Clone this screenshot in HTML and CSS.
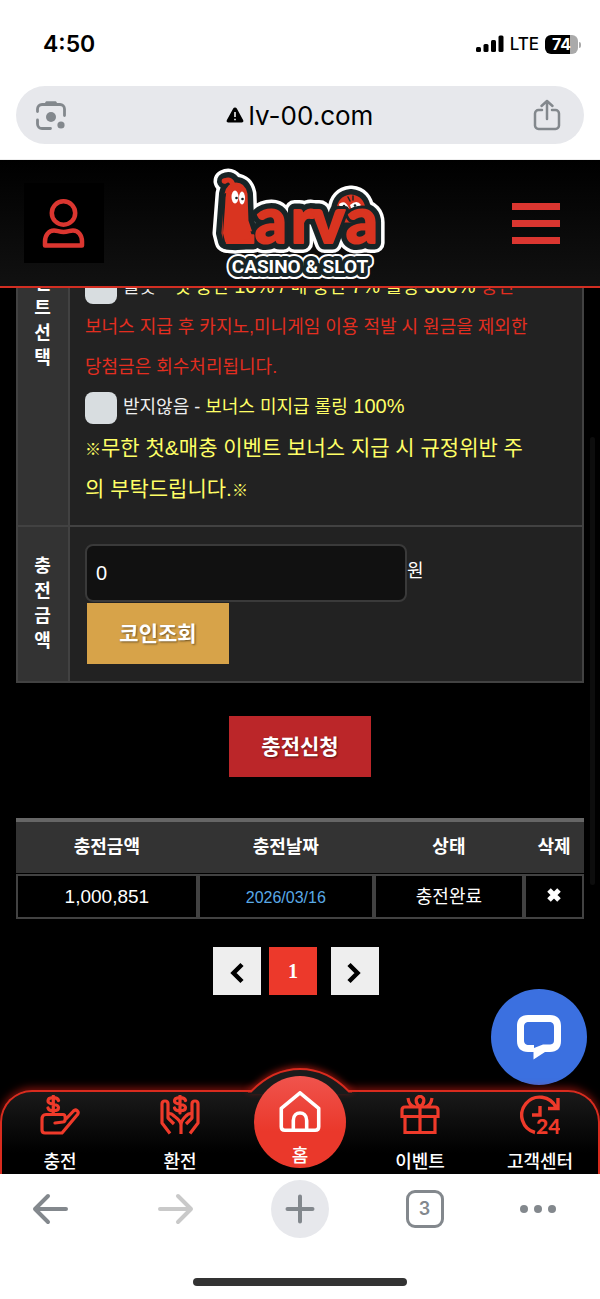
FILE: index.html
```html
<!DOCTYPE html>
<html lang="ko">
<head>
<meta charset="utf-8">
<meta name="viewport" content="width=device-width, initial-scale=1">
<title>Larva - 충전신청</title>
<link rel="stylesheet" href="styles.css">
</head>
<body>

<!-- status bar -->
<div class="status">
	<span class="time">4:50</span>
	<div class="status_right">
		<svg width="28" height="18" viewBox="0 0 28 18">
			<rect x="0" y="12" width="5" height="5" rx="1.5"/><rect x="7.5" y="9" width="5" height="8" rx="1.5"/>
			<rect x="15" y="5" width="5" height="12" rx="1.5"/><rect x="22.5" y="0.5" width="5" height="16.5" rx="1.5"/>
		</svg>
		<span class="lte">LTE</span>
		<span class="battery">74</span>
	</div>
</div>
<div class="address_wrap">
	<div class="address">
		<button class="plain" aria-label="lens">
			<svg width="30" height="30" viewBox="0 0 30 30" fill="none" stroke="#83888d" stroke-width="2.8" stroke-linecap="round">
				<path d="M1.5 11.5V9a4.500 4.500 0 0 1 4.500-4.500h18A4.500 4.500 0 0 1 28.500 9v6.500M1.500 20v4A4.500 4.500 0 0 0 6 28.500h8.500"/>
				<path d="M9 4.500l1.500-2.500h9L21 4.500z" fill="#83888d" stroke-width="1.5" stroke-linejoin="round"/>
				<circle cx="15" cy="17" r="5" fill="#83888d" stroke="none"/><circle cx="25" cy="25" r="3.6" fill="#83888d" stroke="none"/>
			</svg>
		</button>
		<span class="url">
			<svg width="18" height="16" viewBox="0 0 18 16"><path d="M9 .5c.8 0 1.400.4 1.800 1l6.300 11.500c.8 1.300 0 2.500-1.500 2.500H2.400C.9 15.500.1 14.300.9 13L7.200 1.500C7.600.9 8.200.5 9 .5z"/><path d="M9 5v5M9 11.800v1.500" stroke="#fff" stroke-width="1.5"/></svg>
			lv-00.com
		</span>
		<button class="plain" aria-label="share">
			<svg width="28" height="32" viewBox="0 0 28 32" fill="none" stroke="#83888d" stroke-width="2.5" stroke-linecap="round" stroke-linejoin="round">
				<path d="M9 11H5.500A3.500 3.500 0 0 0 2 14.500v12A3.500 3.500 0 0 0 5.500 30h17a3.500 3.500 0 0 0 3.500-3.500v-12a3.500 3.500 0 0 0-3.500-3.500H19M14 20V2M8.500 7L14 2l5.500 5"/>
			</svg>
		</button>
	</div>
</div>

<div class="site">
	<header class="header">
		<a class="member" href="#" aria-label="회원">
			<svg width="44" height="50" viewBox="0 0 44 50" fill="none" stroke="#db3630" stroke-width="4.5" stroke-linejoin="round">
				<circle cx="21.500" cy="15" r="11.7"/>
				<path d="M3 47.500v-4c0-6.500 3.800-11 9-11 3.500 0 5 1.500 9.500 1.500s6-1.500 9.500-1.500c5.200 0 9 4.500 9 11v4z"/>
			</svg>
		</a>
		<a class="logo" href="#" aria-label="Larva Casino &amp; Slot">
			<svg width="188" height="116" viewBox="-6 -2 188 116" stroke-linejoin="round" stroke-linecap="round">
				<defs>
					<!-- worm body and the small one behind the last letter -->
					<g id="worm">
						<path d="M12 66L15 27Q17 18 24 18T33 27L34 54 40 72Q26 77 14 74z"/>
						<path d="M21 18Q19 11 13 14" fill="none"/>
					</g>
					<path id="bird" d="M127 53V43Q128 31 139 30Q150 31 151 43V53z"/>
					<g id="word">
						<text class="lt" x="10" y="76">L</text>
						<text class="lt" x="43" y="76">a</text>
						<text class="lt" x="79" y="76">r</text>
						<text class="lt" x="100" y="76">v</text>
						<text class="lt" x="134" y="76">a</text>
					</g>
				</defs>
				<g fill="#fff" stroke="#fff" stroke-width="23"><use href="#worm"/><use href="#bird"/></g>
				<g fill="#fff" stroke="#fff" stroke-width="20"><use href="#word"/></g>
				<g fill="#182426" stroke="#182426" stroke-width="16"><use href="#worm"/><use href="#bird"/></g>
				<g fill="#182426" stroke="#182426" stroke-width="13"><use href="#word"/></g>
				<g fill="#d93420" stroke="#d93420" stroke-width="5"><use href="#bird"/><use href="#worm"/></g>
				<path d="M138 34l-2-4M141 33v-4" stroke="#182426" stroke-width="1.5"/>
				<g fill="#fff"><path d="M127 37q6-5 10 4-6 2-9 0zM138 38q7-6 11 0-4 4-10 3z"/></g>
				<g fill="#d93420" stroke="#182426" stroke-width="8"><use href="#word" class="outline"/></g>
				<g fill="#d93420" stroke="#d93420" stroke-width="2"><use href="#word"/><use href="#worm"/></g>
				<circle cx="12.500" cy="14" r="2.8" fill="#d93420"/>
				<g fill="#fff"><ellipse cx="23" cy="30" rx="3.5" ry="6.5"/><ellipse cx="30" cy="31" rx="3" ry="6.5"/></g>
				<g fill="#182426"><circle cx="24.500" cy="31" r="1.3"/><circle cx="30.500" cy="32" r="1.3"/><circle cx="132" cy="39" r="1.3"/><circle cx="143" cy="38.500" r="1.3"/></g>
				<g class="sub">
					<text x="88" y="106" stroke="#fff" stroke-width="12">CASINO &amp; SLOT</text>
					<text x="88" y="106" stroke="#182426" stroke-width="8">CASINO &amp; SLOT</text>
					<text x="88" y="106" fill="#fff">CASINO &amp; SLOT</text>
				</g>
			</svg>
		</a>
		<button class="menu" aria-label="메뉴"><i></i><i></i><i></i></button>
	</header>

	<main class="main">
		<form id="charge">
			<table class="form_table">
				<tr class="event_row">
					<th scope="row">이벤트선택</th>
					<td>
						<p><input type="checkbox" id="ev1"><label for="ev1">슬롯<b> - </b><em>첫 충전<b> 10% / </b>매 충전<b> 7% </b>롤링<b> 300% </b></em></label><span class="red">충전<br>보너스 지급 후 카지노,미니게임 이용 적발 시 원금을 제외한 당첨금은 회수처리됩니다.</span></p>
						<p><input type="checkbox" id="ev2"><label for="ev2">받지않음 - <em>보너스 미지급 롤링<b> 100%</b></em></label></p>
						<p class="notice"><small>※</small>무한 첫&amp;매충 이벤트 보너스 지급 시 규정위반 주의 부탁드립니다.<small>※</small></p>
					</td>
				</tr>
				<tr>
					<th scope="row"><label for="money">충전금액</label></th>
					<td>
						<div class="money"><input type="text" id="money" value="0"><span>원</span></div>
						<button type="button" class="btn gold">코인조회</button>
					</td>
				</tr>
			</table>
			<button type="button" class="btn submit">충전신청</button>
		</form>

		<table class="list">
			<colgroup><col class="c1"><col class="c2"><col><col class="c4"></colgroup>
			<thead>
				<tr><th>충전금액</th><th>충전날짜</th><th>상태</th><th>삭제</th></tr>
			</thead>
			<tbody>
				<tr>
					<td class="num">1,000,851</td>
					<td class="date">2026/03/16</td>
					<td>충전완료</td>
					<td><button class="plain del" aria-label="삭제"><svg width="16" height="16" viewBox="0 0 16 16"><path d="M3 3l10 10M13 3L3 13" stroke="#fff" stroke-width="5"/></svg></button></td>
				</tr>
			</tbody>
		</table>

		<div class="paging">
			<a href="#" aria-label="이전"><svg width="16" height="22" viewBox="0 0 16 22"><path d="M13 2.500L4.500 11l8.500 8.500" fill="none" stroke="#000" stroke-width="4.5"/></svg></a>
			<a href="#" class="on">1</a>
			<a href="#" aria-label="다음"><svg width="16" height="22" viewBox="0 0 16 22"><path d="M2 2.500l8.500 8.500L2 19.500" fill="none" stroke="#000" stroke-width="4.5"/></svg></a>
		</div>
		<div class="scrollbar"></div>
	</main>

	<button class="chat" aria-label="채팅">
		<svg width="46" height="46" viewBox="0 0 46 46"><path fill="#fff" fill-rule="evenodd" d="M12 1h22c7 0 11 4 11 11v15c0 7-4 11-11 11h-5L17.500 45.500V38H12C5 38 1 34 1 27V12C1 5 5 1 12 1zm1 7c-3.500 0-5 1.500-5 5v13c0 3.500 1.500 5 5 5h5v3l9-3.500H33c3.500 0 5-1 5-4.500V13c0-3.500-1.500-5-5-5z"/></svg>
	</button>

	<nav class="tabs">
		<svg class="bump" width="104" height="27" viewBox="0 0 104 27"><path d="M0 24.500h2.500Q25 2 52 2t49.500 22.500h2.500V27H0z" fill="#1b1b1b"/><path d="M0 24.500h3Q25 2 52 2t49 22.500h3" fill="none" stroke="#d92b1e" stroke-width="2"/></svg>
		<a href="#">
			<svg width="40" height="40" viewBox="0 0 40 40" fill="none" stroke="#ef3a2a" stroke-width="3.2" stroke-linejoin="round" stroke-linecap="round">
				<path d="M18.500 5.500C17.500 1.500 8 1.500 8 6s10.500 2 10.500 6.500-9.500 4-10.500 0.500M13.300 1v18"/>
				<path d="M15 28l8-1c3 0 3-7.500 0-7.500H6c-3 0-4 2-4 5V35c0 2 1 3 3 3h17L37.500 19.500c2-3-1.500-6-4-3.500L25 25"/>
			</svg>
			<span>충전</span>
		</a>
		<a href="#">
			<svg width="40" height="40" viewBox="0 0 40 40" fill="none" stroke="#ef3a2a" stroke-width="3.2" stroke-linejoin="round">
				<path d="M25.500 5.500C24.500 1.500 14.500 1.500 14.500 6s11 2 11 6.500-10 4-11 0.500M20 1v17" stroke-linecap="round"/>
				<path d="M10 38.500L2 28V9c0-4 6-4 6 0v14l6 6M8 19c2-1 4 0 5.500 1.500S21 25 21 30v9M30 38.500L38 28V9c0-4-6-4-6 0v14l-6 6M32 19c-2-1-4 0-5.500 1.500S21 25 21 30"/>
			</svg>
			<span>환전</span>
		</a>
		<a href="#" class="home">
			<svg width="46" height="46" viewBox="0 0 46 46" fill="none" stroke="#fff" stroke-width="4" stroke-linejoin="round">
				<path d="M2 19.500L23 2l21 17.500V40c0 2.500-1.500 4-4 4H6c-2.500 0-4-1.500-4-4zM15.500 44V33c0-11 15-11 15 0v11"/>
			</svg>
			<span>홈</span>
		</a>
		<a href="#">
			<svg width="40" height="40" viewBox="0 0 40 40" fill="none" stroke="#ef3a2a" stroke-width="3.2">
				<path d="M5 21.500v16h30v-16M20 12v26M5 12h30q3 0 3 3v6.500H2V15q0-3 3-3zM20 12q-5-4-3.500-8.500Q20-1 23.500 3.500 25 8 20 12zM8 3q1 8 7 9M32 3q-1 8-7 9"/>
			</svg>
			<span>이벤트</span>
		</a>
		<a href="#">
			<svg width="40" height="40" viewBox="0 0 40 40" fill="none" stroke="#ef3a2a" stroke-width="3.4">
				<path d="M15 37.500A18 18 0 1 1 36 12.500M38 3v10.500H28M20 11v9h-8"/>
				<text x="16" y="39" class="n24">24</text>
			</svg>
			<span>고객센터</span>
		</a>
	</nav>
</div>

<!-- browser toolbar -->
<div class="toolbar">
	<button class="plain" aria-label="back"><svg width="58" height="40" viewBox="0 0 58 40" fill="none" stroke="#83888d" stroke-width="4" stroke-linecap="round" stroke-linejoin="round"><path d="M44 20H13M26 7L13 20l13 13"/></svg></button>
	<button class="plain" aria-label="forward"><svg width="58" height="40" viewBox="0 0 58 40" fill="none" stroke="#c9c9c9" stroke-width="4" stroke-linecap="round" stroke-linejoin="round"><path d="M13 20h31M31 7l13 13-13 13"/></svg></button>
	<button class="plain plus" aria-label="new tab"><svg width="30" height="30" viewBox="0 0 30 30" stroke="#83888d" stroke-width="4" stroke-linecap="round"><path d="M2.500 15h25M15 2.500v25"/></svg></button>
	<button class="plain"><span class="count">3</span></button>
	<button class="plain" aria-label="more"><svg width="58" height="40" viewBox="0 0 58 40" fill="#83888d"><circle cx="4" cy="20" r="4"/><circle cx="18" cy="20" r="4"/><circle cx="32" cy="20" r="4"/></svg></button>
</div>
<div class="home_bar"></div>
</body>
</html>
```
FILE: styles.css
```css
*{ margin:0; padding:0; box-sizing:border-box;}
html,body{ height:100%;}
body{ display:flex; flex-direction:column; background:#fff; color:#fff; font-family:"Liberation Sans","Noto Sans CJK KR",sans-serif; font-size:18px;}
a{ color:inherit; text-decoration:none;}
button,input{ font-family:inherit; color:inherit; border:0;}
svg{ display:block;}
em{ font-style:normal;}
.plain{ background:none; display:flex; align-items:center; justify-content:center;}

/* browser top */
.status{ height:86px; padding:2px 22px 0 43px; display:flex; align-items:center; justify-content:space-between; color:#000; font-family:Inter,sans-serif;}
.time{ font-size:23px; font-weight:600;}
.status_right{ display:flex; align-items:center; gap:6px;}
.lte{ font-size:17px; font-weight:500;}
.battery{ width:33px; height:19px; border-radius:6px; background:linear-gradient(90deg,#000 75%,#aaa 75%); color:#fff; font-size:16px; font-weight:700; line-height:19px; text-align:center; position:relative;}
.battery:after{ content:""; position:absolute; right:-3px; top:7px; width:2px; height:6px; border-radius:0 2px 2px 0; background:#aaa;}
.address_wrap{ padding:0 16px 15px; border-bottom:1px solid #eee;}
.address{ height:58px; padding:0 23px 0 20px; border-radius:29px; background:#e7e8ec; display:flex; align-items:center; justify-content:space-between;}
.url{ display:flex; align-items:center; gap:5px; color:#000; font-family:Inter,sans-serif; font-size:26px;}

/* site */
.site{ flex:1; min-height:0; display:flex; flex-direction:column; background:#000; position:relative;}
.header{ height:128px; flex:none; padding:0 24px; display:grid; grid-template-columns:1fr auto 1fr; align-items:center; background:linear-gradient(#000,#111); border-bottom:2px solid #d22e22;}
.member{ width:80px; height:80px; background:#000; display:flex; align-items:center; justify-content:center;}
.menu{ justify-self:end; width:48px; margin-right:16px; background:none; display:flex; flex-direction:column; gap:10px;}
.menu i{ height:7px; background:#db3630;}
.lt{ font-family:Lato,sans-serif; font-weight:900; font-size:62px;}
.outline{ paint-order:stroke;}
.sub text{ font-family:"Liberation Sans Narrow",Roboto,sans-serif; font-weight:700; font-size:19px; text-anchor:middle;}

.main{ flex:1; min-height:0; overflow:hidden; padding:0 16px; position:relative;}
/* page is scrolled down to the amount row */
.form_table{ width:100%; margin-top:-199px; border-collapse:collapse; background:#222;}
.form_table th,.form_table td{ border:2px solid #424242;}
.form_table th{ width:52px; padding:0 16px 0 15px; background:#333; line-height:25px; word-break:break-all;}
.form_table td{ padding:17px 48px 17px 15px;}
.event_row{ height:436px;}
.event_row td{ padding-bottom:16px; vertical-align:bottom; line-height:40px; color:#eee;}
.event_row em{ color:#ffff66;}
.event_row b{ font-size:20px; font-weight:400; line-height:1;}
.event_row .red{ color:#e32e20;}
.event_row input{ appearance:none; width:32px; height:32px; margin-right:6px; border-radius:8px; background:#d8dde0; vertical-align:middle;}
.event_row .notice{ color:#ffff66; font-size:21px; line-height:41px; word-break:break-all;}
.notice small{ font-size:16px; font-weight:700; line-height:1;}
.money{ display:flex; align-items:center;}
.money input{ width:322px; height:58px; padding:0 9px; border:2px solid #3a3a3a; border-radius:8px; background:#111; font-size:20px;}
.money span{ padding-bottom:8px;}
.btn{ display:block; width:142px; height:61px; font-size:21px; font-weight:700; padding-bottom:3px; text-shadow:1px 1px 2px rgba(0,0,0,.5);}
.gold{ margin:1px 0 0 2px; background:#d7a349;}
.submit{ margin:33px auto 41px; background:#bb2629;}

.list{ width:100%; table-layout:fixed; border-collapse:separate; border-spacing:0; text-align:center;}
.c1{ width:32%;}
.c2{ width:31%;}
.c4{ width:60px;}
.list th{ height:56px; padding-bottom:5px; background:#333; border-top:4px solid #666; border-bottom:1px solid #000;}
.list td{ height:45px; padding-bottom:3px; border:2px solid #424242;}
.list .num{ padding:0; font-size:19px;}
.list .date{ padding:2px 0 0; color:#5aa9e6; font-size:16px;}
.del{ margin:0 auto;}
.paging{ margin-top:28px; padding-right:8px; display:flex; justify-content:center; gap:8px;}
.paging a{ width:48px; height:48px; background:#eee; display:flex; align-items:center; justify-content:center;}
.paging .on{ margin-right:6px; background:#ec392b; font-family:"Liberation Serif",serif; font-weight:700; font-size:20px;}
.paging svg{ margin-top:4px;}
.scrollbar{ position:absolute; right:5px; top:149px; width:5px; height:448px; border-radius:3px; background:#0d0d0d;}
.chat{ position:absolute; right:13px; bottom:89px; width:96px; height:96px; border-radius:50%; background:#3b70e0; display:flex; align-items:center; justify-content:center;}

.tabs{ height:84px; flex:none; display:flex; position:relative; border-radius:32px 32px 0 0; background:linear-gradient(#1b1b1b,#000 75%); box-shadow:0 -2px 8px rgba(217,30,20,.6);}
.tabs:before{ content:""; position:absolute; inset:0; border:2px solid #d92b1e; border-bottom:0; border-radius:32px 32px 0 0;}
.tabs a{ flex:1; display:flex; flex-direction:column; align-items:center; font-weight:500; line-height:24px; padding-top:5px; gap:15px; position:relative;}
.bump{ position:absolute; left:50%; top:-23px; margin-left:-52px; filter:drop-shadow(0 -2px 3px rgba(217,30,20,.6));}
.tabs a.home{ flex:none; width:92px; height:92px; margin:-14px 14px 0; padding-top:15px; gap:12px; border-radius:50%; background:linear-gradient(#f0544d,#ea382b 60%);}
.n24{ font-family:Lato,sans-serif; font-weight:900; font-size:21px; fill:#ef3a2a; stroke:none;}

/* browser bottom */
.toolbar{ height:70px; padding:0 22px; background:#fff; display:flex; align-items:center; justify-content:space-between; position:relative;}
.toolbar button{ width:58px; height:58px;}
.plus{ border-radius:50%; background:#e7e8ec;}
.count{ width:38px; height:38px; border:3px solid #83888d; border-radius:9px; color:#83888d; font:600 18px/32px Inter,sans-serif; text-align:center;}
.home_bar{ width:214px; height:8px; margin:34px auto 13px; border-radius:4px; background:#333;}
```
